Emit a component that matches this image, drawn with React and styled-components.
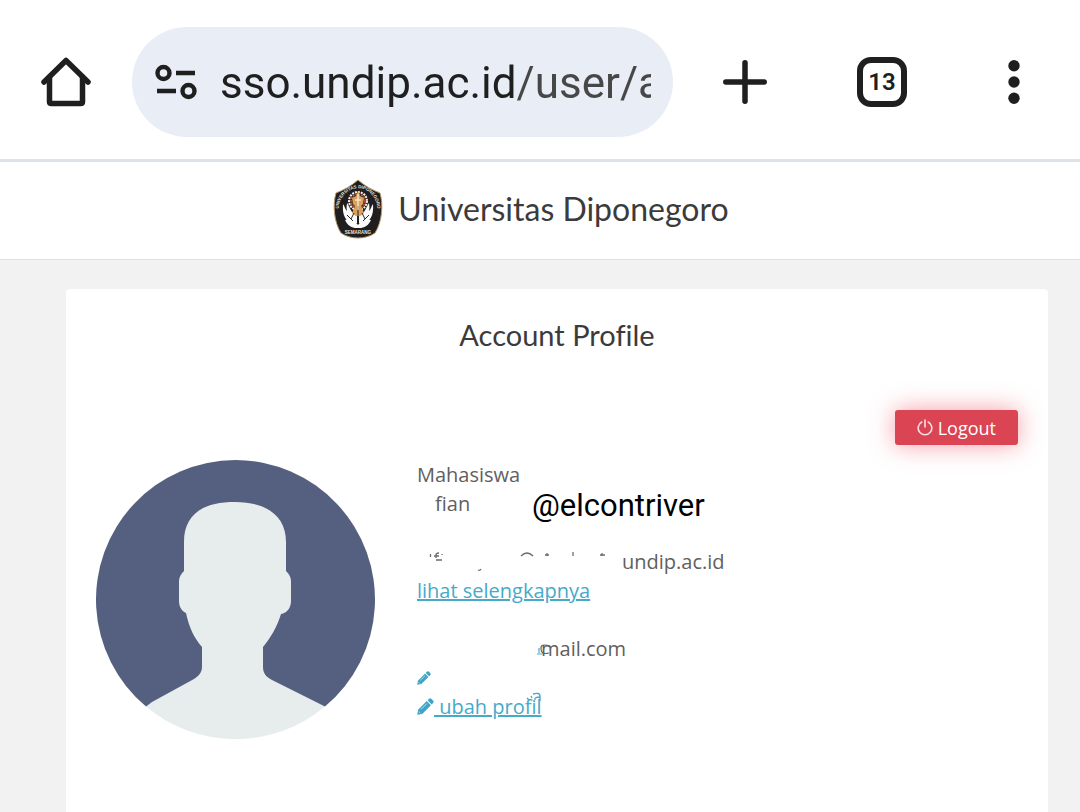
import React, { useState } from "react";
import styled, { createGlobalStyle } from "styled-components";

const GlobalStyle = createGlobalStyle`
  * {
    box-sizing: border-box;
  }
  body {
    margin: 0;
    background: #f2f2f2;
    color: #5f6060;
    font-family: "Open Sans", "Noto Sans", sans-serif;
  }
  button {
    border: 0;
    padding: 0;
    background: none;
    cursor: pointer;
  }
`;

function HomeIcon() {
  return (
    <svg width="50" height="50" viewBox="0 0 50 50" fill="none" stroke="#1f1f1f" strokeWidth="5.500" strokeLinecap="round" strokeLinejoin="round">
      <path d="M3 25 L25 3.500 L47 25" />
      <path d="M8.500 20 V45 Q8.500 46.500 10.500 46.500 H39.500 Q41.500 46.500 41.500 45 V20" />
    </svg>
  );
}

function SiteIcon() {
  return (
    <svg width="42" height="36" viewBox="0 0 42 36" fill="none" stroke="#1f1f1f" strokeWidth="4.400">
      <circle cx="8.500" cy="9" r="6" />
      <path d="M21 9 H40 M2 27 H21" />
      <circle cx="33.500" cy="27" r="6" />
    </svg>
  );
}

function PlusIcon() {
  return (
    <svg width="44" height="44" viewBox="0 0 44 44" stroke="#1f1f1f" strokeWidth="5.500" strokeLinecap="round">
      <path d="M22 2.800 V41.200 M2.800 22 H41.200" />
    </svg>
  );
}

function DotsIcon() {
  return (
    <svg width="12" height="44" viewBox="0 0 12 44" fill="#1f1f1f">
      <circle cx="6" cy="5.700" r="5.700" />
      <circle cx="6" cy="22" r="5.700" />
      <circle cx="6" cy="38.300" r="5.700" />
    </svg>
  );
}

function Crest() {
  return (
    <svg width="50" height="60" viewBox="0 0 50 60" role="img" aria-label="Logo">
      <path
        d="M25 1 C32 7 39 11 47 14 C50.500 26 49 43 42 54 C37 57.500 31 59 25 59 C19 59 13 57.500 8 54 C1 43 -0.500 26 3 14 C11 11 18 7 25 1Z"
        fill="#211e1f"
        stroke="#b39a6a"
        strokeWidth="1"
      />
      <path id="crestArc" d="M6 38 C3 22 12 10 25 9 C38 10 47 22 44 38" fill="none" />
      <g fill="#e6e2d8" fontFamily="Liberation Sans, sans-serif" fontSize="4.500" fontWeight="700">
        <text textAnchor="middle">
          <textPath href="#crestArc" startOffset="50%">
            UNIVERSITAS DIPONEGORO
          </textPath>
        </text>
        <text x="25" y="55" textAnchor="middle">
          SEMARANG
        </text>
      </g>
      <circle cx="25" cy="22" r="9" fill="#3a2620" stroke="#f6efe9" strokeWidth="2" strokeDasharray="2 1" />
      <circle cx="25" cy="22" r="7" fill="none" stroke="#c25a3c" strokeWidth="1.500" strokeDasharray="2 1" />
      <g fill="#fbfbfb">
        <path d="M24 44 C13 45 9 37 10 25 C12 28 12 30 14 32 C13 28 14 26 14 24 C17 28 17 33 24 37Z" />
        <path d="M26 44 C37 45 41 37 40 25 C38 28 38 30 36 32 C37 28 36 26 36 24 C33 28 33 33 26 37Z" />
        <path d="M12 41 C18 39 21 41 25 46 C29 41 32 39 38 41 C34 49 29 49 25 49 C21 49 16 49 12 41Z" />
      </g>
      <path d="M25 12 L27 17 L31 19 L30 25 L28 27 L31 34 L27 37 L23 37 L19 34 L22 27 L20 25 L19 19 L23 17Z" fill="#dca05a" />
      <path d="M25 27 V44 M21 34 L18 40 M29 34 L32 40 M14 36 L20 42 M36 36 L30 42" stroke="#2b2624" strokeWidth="1" />
      <path d="M25 15 V31 M22 21 H28" stroke="#fff" strokeWidth="1" />
    </svg>
  );
}

function Avatar() {
  return (
    <AvatarPicture viewBox="0 0 279 279" role="img" aria-label="Foto profil">
      <path d="M50 246.600 A139.500 139.500 0 1 1 229 246.600Z" fill="#556080" />
      <path
        d="M88 82 C88 55 106 42 139 42 C172 42 190 57 190 82 V111 C193 114 195 117 195 121 V141 C195 148 191 153 185 154 C181 167 175 177 167 187 V207 C167 213 170 217 176 220 L218 241 Q224 244 229 246.600 A139.500 139.500 0 0 1 50 246.600 Q52 245 56 242 L98 219 C103 216 106 212 106 207 V187 C98 178 93 167 90 153 C86 151 83 147 83 141 V121 C83 117 85 114 88 111Z"
        fill="#e7eced"
      />
    </AvatarPicture>
  );
}

function PowerIcon() {
  return (
    <svg width="16" height="17" viewBox="0 0 16 17" fill="none" stroke="#fbdfe2" strokeWidth="1.600" strokeLinecap="round">
      <path d="M8 1 V8 M4.800 3 A6.800 6.800 0 1 0 11.200 3" />
    </svg>
  );
}

function PencilIcon({ size }) {
  return (
    <svg width={size} height={size} viewBox="0 0 17 17" fill="#3ea3c6">
      <path d="M10.600 2.300 L12.200 0.700 Q13.200 0 14.200 0.700 L16.300 2.800 Q17 3.800 16.300 4.800 L14.700 6.400Z" />
      <path d="M9.800 3.100 L13.900 7.200 L5.200 15.900 L0.300 16.700 L1.100 11.800Z" />
      <path d="M4 11.400 L9.800 5.600 M1.800 13.500 L3.500 15.200" stroke="#c9ebf7" strokeWidth="0.900" />
    </svg>
  );
}

// what is left of the address after it was rubbed out
function EmailRemains() {
  return (
    <svg width="205" height="29" viewBox="0 0 205 29" fill="none" stroke="#6c6c6c" strokeWidth="1.300">
      <path d="M13.500 7 V10 M19 11 V8 Q19 6 22 6 M17 9 H22 M25 7 V8 M19 13 H25 M61 23 Q63 24 64 22 M104 9 Q110 3 116 9 M128 8 H132 M130 6 V9 M156 5 V9 M185 6 V9 M183 8 H188" />
    </svg>
  );
}

function App() {
  const [url, setUrl] = useState("sso.undip.ac.id/user/account");

  return (
    <Screen>
      <GlobalStyle />
      <BrowserBar>
        <BarButton aria-label="Home">
          <HomeIcon />
        </BarButton>
        <AddressBar>
          <SiteIcon />
          <AddressInput aria-label="Address" value={url} onChange={(e) => setUrl(e.target.value)} />
        </AddressBar>
        <BarButton $wide aria-label="New tab">
          <PlusIcon />
        </BarButton>
        <BarButton aria-label="Tabs">
          <TabCount>13</TabCount>
        </BarButton>
        <BarButton aria-label="Menu">
          <DotsIcon />
        </BarButton>
      </BrowserBar>
      <Brand>
        <Crest />
        <BrandName>Universitas Diponegoro</BrandName>
      </Brand>
      <Main>
        <Card>
          <Title>Account Profile</Title>
          <Actions>
            <LogoutButton>
              <PowerIcon />
              Logout
            </LogoutButton>
          </Actions>
          <Profile>
            <Avatar />
            <Info>
              <Line>Mahasiswa</Line>
              <Line $indent={18}>fian</Line>
              <Watermark>@elcontriver</Watermark>
              <Line />
              <Line>
                <EmailRemains />
                undip.ac.id
              </Line>
              <Line>
                <TextLink href="#detail">lihat selengkapnya</TextLink>
              </Line>
              <Line />
              <Line $indent={120}>
                <svg width="4" height="16" viewBox="0 0 4 16" overflow="visible" fill="none" strokeWidth="1.200">
                  <path d="M0 13 H5 M2 7 V12" stroke="#4aa9c6" />
                  <path d="M13 5 Q3 2 4 8 Q4 14 12 12" stroke="#666" />
                </svg>
                mail.com
              </Line>
              <Line>
                <EditLink href="#email" aria-label="ubah email">
                  <PencilIcon size={14} />
                </EditLink>
              </Line>
              <Line>
                <EditLink href="#profil">
                  <PencilIcon size={17} />
                  <span>&nbsp;ubah profil</span>
                  <Smudge viewBox="0 0 16 10">
                    <path d="M1 6 L3 8 M5 4 L6 6 M7 2 Q14 0 14 4 V9 M14 5 Q8 5 9 8" />
                  </Smudge>
                </EditLink>
              </Line>
            </Info>
          </Profile>
        </Card>
      </Main>
    </Screen>
  );
}

const Screen = styled.div`
  min-height: 100vh;
  display: flex;
  flex-direction: column;
`;
const BrowserBar = styled.header`
  display: flex;
  align-items: center;
  padding: 27px 0 22px;
  background: #fff;
  border-bottom: 3px solid #dee3e9;
`;
const BarButton = styled.button`
  width: ${(props) => (props.$wide ? 143 : 132)}px;
  height: 110px;
  display: flex;
  align-items: center;
  justify-content: center;
`;
const AddressBar = styled.div`
  flex: 1;
  min-width: 0;
  height: 110px;
  display: flex;
  align-items: center;
  gap: 23px;
  padding: 0 22px 0 23px;
  border-radius: 55px;
  background: #e8edf6;
  svg {
    flex: none;
  }
`;
const AddressInput = styled.input`
  flex: 1;
  min-width: 0;
  height: 62px;
  padding: 2px 0 0;
  border: 0;
  outline: 0;
  font-family: Roboto, sans-serif;
  font-size: 44px;
  color: transparent;
  background: linear-gradient(to right, #1f1f1f 297px, #474747 297px);
  background-clip: text;
`;
const TabCount = styled.span`
  width: 50px;
  height: 50px;
  display: flex;
  align-items: center;
  justify-content: center;
  border: 6px solid #1f1f1f;
  border-radius: 14px;
  color: #1f1f1f;
  font-family: Roboto, sans-serif;
  font-size: 24px;
  font-weight: 600;
`;
const Brand = styled.div`
  display: flex;
  align-items: center;
  justify-content: center;
  gap: 15px;
  padding: 17px 38px 20px 20px;
  background: #fff;
  border-bottom: 1px solid #e0e0e0;
`;
const BrandName = styled.span`
  color: #3b3b3b;
  font-family: Lato, sans-serif;
  font-size: 32px;
  line-height: 40px;
`;
const Main = styled.main`
  flex: 1;
  display: flex;
  padding: 29px 32px 0 66px;
`;
const Card = styled.section`
  flex: 1;
  padding: 29px 30px;
  border-radius: 4px 4px 0 0;
  background: #fff;
`;
const Title = styled.h1`
  margin: 0;
  color: #3b3b3b;
  font-family: Lato, sans-serif;
  font-size: 29px;
  font-weight: 400;
  line-height: 34px;
  text-align: center;
  font-variant-ligatures: none;
`;
const Actions = styled.div`
  display: flex;
  justify-content: flex-end;
  margin: 58px 0 15px;
`;
const LogoutButton = styled.button`
  display: flex;
  align-items: center;
  gap: 5px;
  height: 35px;
  && {
    padding: 0 22px;
    background: #da4453;
  }
  border-radius: 3px;
  color: #fff;
  font-family: "Open Sans", sans-serif;
  font-size: 18px;
  box-shadow: 0 0 24px rgba(237, 60, 80, 0.5);
`;
const Profile = styled.div`
  display: grid;
  grid-template-columns: minmax(0, 279px) 1fr;
  column-gap: 42px;
  align-items: start;
`;
const AvatarPicture = styled.svg`
  width: 100%;
  display: block;
`;
const Info = styled.div`
  position: relative;
`;
const Line = styled.div`
  display: flex;
  align-items: center;
  height: 29px;
  padding-left: ${(props) => props.$indent || 0}px;
  font-size: 20px;
  line-height: 29px;
  white-space: nowrap;
`;
const Watermark = styled.div`
  position: absolute;
  top: 28px;
  left: 115px;
  color: #000;
  font-family: Roboto, sans-serif;
  font-size: 31px;
  line-height: 36px;
`;
const TextLink = styled.a`
  color: #46aac9;
  text-decoration: underline;
`;
const EditLink = styled.a`
  position: relative;
  display: flex;
  align-items: center;
  color: #46aac9;
  text-decoration: none;
  span {
    text-decoration: underline;
  }
`;
const Smudge = styled.svg`
  position: absolute;
  top: 0;
  right: 0;
  width: 16px;
  height: 10px;
  fill: none;
  stroke: #4aa9c6;
  stroke-width: 1.4;
`;

export default App;
